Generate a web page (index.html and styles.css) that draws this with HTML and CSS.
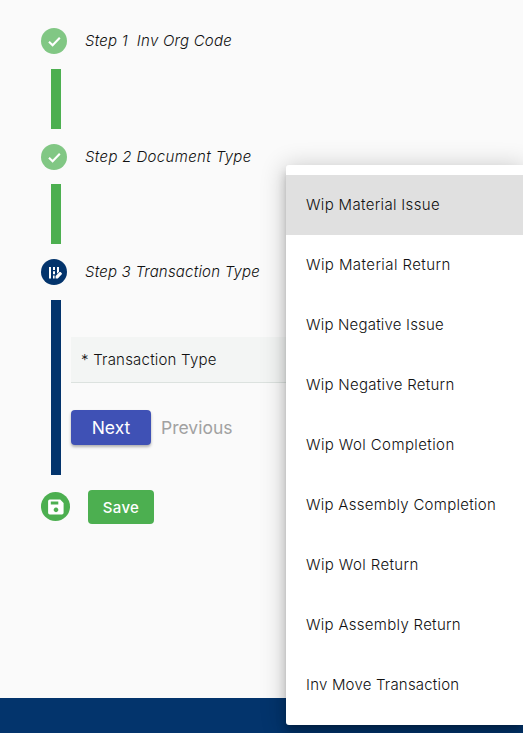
FILE: index.html
```html
<!DOCTYPE html>
<html lang="en">
<head>
<meta charset="utf-8">
<title>Transaction steps</title>
<link rel="stylesheet" href="styles.css">
</head>
<body>
<main class="page">
  <section class="step">
    <header class="step-head">
      <svg class="step-icon done" viewBox="0 0 26 26"><circle cx="13" cy="13" r="13"/><path class="check" d="M8 13.7l3.6 3.5 7.2-7.4"/></svg>
      <h2 class="step-title t1">Step 1&nbsp; Inv Org Code</h2>
    </header>
    <div class="step-body"></div>
  </section>
  <section class="step">
    <header class="step-head">
      <svg class="step-icon done" viewBox="0 0 26 26"><circle cx="13" cy="13" r="13"/><path class="check" d="M8 13.7l3.6 3.5 7.2-7.4"/></svg>
      <h2 class="step-title t2">Step 2 Document Type</h2>
    </header>
    <div class="step-body"></div>
  </section>
  <section class="step">
    <header class="step-head">
      <svg class="step-icon active" viewBox="0 0 26 26"><circle cx="13" cy="13" r="13"/><path class="glyph" d="M8 8h2v11.5H8zM12 8h2v3h-2zM12 12.2h2v3h-2zM12 16.4h1.6v3.1H12zM16 8h2v4.7l-2 2zM14.6 17.1l4-4q.5-.4 1 0l1.2 1.2q.4.5 0 1l-4 4.2h-2.2z"/></svg>
      <h2 class="step-title t3">Step 3 Transaction Type</h2>
    </header>
    <div class="step-body current">
      <div class="field"><label>* Transaction Type</label></div>
      <div class="actions">
        <button class="next">Next</button>
        <button class="previous">Previous</button>
      </div>
    </div>
  </section>
  <div class="save-row">
    <svg class="save-icon" viewBox="0 0 29 29"><circle cx="14.5" cy="14.5" r="14.5"/><path class="glyph" fill-rule="evenodd" d="M8.8 7.5h10.4l3.4 3.4v9.9q0 1.7-1.7 1.7H8.8q-1.7 0-1.7-1.7V9.2q0-1.7 1.7-1.7zM9.8 9.4v3h7.5v-3zM15 15.6a2.3 2.3 0 1 0 .01 0z"/></svg>
    <button class="save">Save</button>
  </div>
</main>
<footer class="footer"></footer>
<ul class="menu">
  <li class="selected"><span class="m1">Wip Material Issue</span></li>
  <li><span class="m2">Wip Material Return</span></li>
  <li><span class="m3">Wip Negative Issue</span></li>
  <li><span class="m4">Wip Negative Return</span></li>
  <li><span class="m5">Wip Wol Completion</span></li>
  <li><span class="m6">Wip Assembly Completion</span></li>
  <li><span class="m7">Wip Wol Return</span></li>
  <li><span class="m8">Wip Assembly Return</span></li>
  <li><span class="m9">Inv Move Transaction</span></li>
</ul>
</body>
</html>
```
FILE: styles.css
```css
* { box-sizing: border-box; }
body {
  margin: 0;
  height: 733px;
  overflow: hidden;
  position: relative;
  display: flex;
  flex-direction: column;
  background: #fafafa;
  color: #111;
  font-family: Inter, "Open Sans", sans-serif;
  font-size: 15px;
  font-weight: 300;
}
.page { flex: 1; padding: 28px 0 0 41px; }
.step-head { display: flex; align-items: center; height: 26px; gap: 18px; }
.step-icon { width: 26px; height: 26px; flex: none; }
.done circle { fill: #81c784; }
.active circle { fill: #03346c; }
.check { fill: none; stroke: #fff; stroke-width: 2.1; }
.glyph { fill: #fff; }
.step-title { margin: 0; padding-bottom: 1px; font-size: 15px; font-weight: 300; font-style: italic; white-space: nowrap; }
.t1 { letter-spacing: .24px; }
.t2 { letter-spacing: .35px; }
.t3 { letter-spacing: .2px; }
.step-body {
  margin: 14.8px 0 14.8px 10px;
  height: 60px;
  border-left: 10px solid #4caf50;
}
.step-body.current {
  height: 175px;
  margin-bottom: 0;
  padding: 37px 0 0 10px;
  border-color: #03346c;
}
.field {
  height: 46px;
  padding-left: 10px;
  display: flex;
  align-items: center;
  background: #f3f5f4;
  border-bottom: 1px solid #dce2df;
  letter-spacing: .21px;
}
.actions { display: flex; gap: 10px; margin-top: 27px; }
button { border: 0; padding: 0; font-family: inherit; border-radius: 4px; color: #fff; }
.next {
  width: 80px;
  height: 35px;
  background: #3f51b5;
  font-size: 17.5px;
  font-weight: 400;
  box-shadow: 0 2px 3px rgba(0,0,0,.3);
}
.previous { background: none; color: #a1a1a1; font-size: 17.5px; font-weight: 400; }
.save-row { display: flex; align-items: center; gap: 18px; margin-top: 15px; height: 34px; }
.save-icon { width: 29px; height: 29px; }
.save-icon circle { fill: #4caf50; }
.save { width: 66px; height: 34px; padding-top: 1px; background: #4caf50; font-size: 15px; font-weight: 500; letter-spacing: .3px; }
.footer { height: 35.5px; flex: none; background: #03346c; }
.menu {
  position: absolute;
  left: 286px;
  right: 0;
  top: 165px;
  height: 560px;
  margin: 0;
  padding: 10px 0;
  list-style: none;
  background: #fff;
  border-radius: 3px 0 0 3px;
  box-shadow: 0 5px 5px -3px rgba(0,0,0,.2), 0 8px 10px 1px rgba(0,0,0,.14), 0 3px 24px 2px rgba(0,0,0,.2);
}
.menu li { height: 60px; padding: 0 0 1px 20px; display: flex; align-items: center; white-space: nowrap; }
.menu .selected { background: #e0e0e0; }
.m1 { letter-spacing: .33px; }
.m2 { letter-spacing: .42px; }
.m3 { letter-spacing: .19px; }
.m4 { letter-spacing: .28px; }
.m5 { letter-spacing: .4px; }
.m6 { letter-spacing: .28px; }
.m7 { letter-spacing: .39px; }
.m8 { letter-spacing: .29px; }
.m9 { letter-spacing: .2px; }
```
